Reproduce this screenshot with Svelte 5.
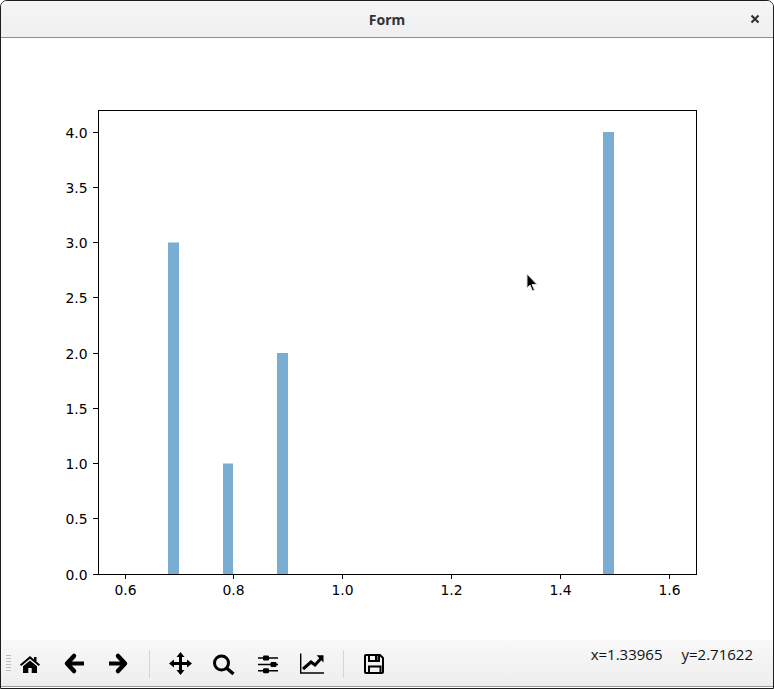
<script>
  const xTicks = [
    { v: 0.6, px: 125 },
    { v: 0.8, px: 233 },
    { v: 1.0, px: 342 },
    { v: 1.2, px: 451 },
    { v: 1.4, px: 560 },
    { v: 1.6, px: 669 }
  ];
  const yTicks = [0, 0.5, 1, 1.5, 2, 2.5, 3, 3.5, 4];
  const bars = [
    { x: 168, w: 11, v: 3 },
    { x: 223, w: 10, v: 1 },
    { x: 277, w: 11, v: 2 },
    { x: 603, w: 11, v: 4 }
  ];
  const left = 98, right = 696, top = 110, bottom = 574;
  const sy = (v) => bottom - v * 110.5;
</script>

<div class="window">
  <header class="titlebar">
    <span class="title">Form</span>
    <svg class="close" width="10" height="10" viewBox="0 0 10 10">
      <path d="M1.5 1.5 L8.5 8.5 M8.5 1.5 L1.5 8.5" stroke="#2e3436" stroke-width="2.2" fill="none" />
    </svg>
  </header>

  <main class="canvas">
    <svg class="plot" width="772" height="602" viewBox="1 38 772 602">
      {#each bars as b}
        <rect x={b.x} y={sy(b.v)} width={b.w} height={bottom - sy(b.v)} fill="#79add2" />
      {/each}
      <rect x={left + 0.5} y={top + 0.5} width={right - left} height={bottom - top} fill="none" stroke="#000" stroke-width="1" />
      {#each xTicks as t}
        <line x1={t.px + 0.5} x2={t.px + 0.5} y1={bottom} y2={bottom + 5} stroke="#000" />
        <text class="tick" x={t.px + 0.5} y={bottom + 21} text-anchor="middle">{t.v.toFixed(1)}</text>
      {/each}
      {#each yTicks as t}
        <line x1={left - 5} x2={left} y1={Math.floor(sy(t)) + 0.5} y2={Math.floor(sy(t)) + 0.5} stroke="#000" />
        <text class="tick" x={left - 10.5} y={sy(t) + 5.5} text-anchor="end">{t.toFixed(1)}</text>
      {/each}
      <!-- mouse pointer -->
      <path d="M527 274 L527 288 L530 285 L532.5 291 L534.5 290 L532 284.500 L537 284.500 Z" fill="#000" stroke="#ddd" stroke-width="1" />
    </svg>
  </main>

  <footer class="toolbar">
    <div class="grip"></div>
    <div class="tools">
      <button class="tool" aria-label="Home">
        <svg width="24" height="24" viewBox="0 0 24 24">
          <path d="M12 4 L2 12.500 L3.300 14 L12 6.700 L20.700 14 L22 12.500 L18.500 9.500 V5 H16 V7.400 Z" fill="#000" />
          <path d="M12 8.500 L5 14.300 V21 H10.300 V16 H13.700 V21 H19 V14.300 Z" fill="#000" />
        </svg>
      </button>
      <button class="tool" aria-label="Back">
        <svg width="24" height="24" viewBox="0 0 24 24">
          <path d="M12 4 L5 11.500 L12 19" stroke="#000" stroke-width="4.500" stroke-linejoin="round" stroke-linecap="round" fill="none" />
          <path d="M6 11.500 H22" stroke="#000" stroke-width="4" fill="none" />
        </svg>
      </button>
      <button class="tool" aria-label="Forward">
        <svg width="24" height="24" viewBox="0 0 24 24">
          <path d="M12 4 L19 11.500 L12 19" stroke="#000" stroke-width="4.500" stroke-linejoin="round" stroke-linecap="round" fill="none" />
          <path d="M3 11.500 H18" stroke="#000" stroke-width="4" fill="none" />
        </svg>
      </button>
      <span class="sep"></span>
      <button class="tool" aria-label="Pan">
        <svg width="24" height="24" viewBox="0 0 24 24">
          <path d="M12.500 4 V19 M5 11.500 H20" stroke="#000" stroke-width="3" fill="none" />
          <path d="M12.500 0 L16.500 5 H8.500 Z M12.500 23 L16.500 18 H8.500 Z M1 11.500 L6 7.500 V15.500 Z M24 11.500 L19 7.500 V15.500 Z" fill="#000" />
        </svg>
      </button>
      <button class="tool" aria-label="Zoom">
        <svg width="24" height="24" viewBox="0 0 24 24">
          <circle cx="9.500" cy="11" r="7" stroke="#000" stroke-width="3" fill="none" />
          <path d="M14.500 16 L21.500 22" stroke="#000" stroke-width="3.400" fill="none" />
        </svg>
      </button>
      <button class="tool" aria-label="Subplots">
        <svg width="24" height="24" viewBox="0 0 24 24">
          <path d="M2 6 H22 M2 12.500 H22 M2 18.800 H22" stroke="#000" stroke-width="1.400" fill="none" />
          <rect x="7" y="3.500" width="6" height="5" rx="1.200" fill="#000" />
          <rect x="14.500" y="10" width="6" height="5" rx="1.200" fill="#000" />
          <rect x="7" y="16.300" width="6" height="5" rx="1.200" fill="#000" />
        </svg>
      </button>
      <button class="tool" aria-label="Axes">
        <svg width="24" height="24" viewBox="0 0 24 24">
          <path d="M0.700 1.500 V21 H24" stroke="#000" stroke-width="1.400" fill="none" />
          <path d="M3 17 L11 10 L15 13 L21 6.500" stroke="#000" stroke-width="3" fill="none" />
          <path d="M16.500 3.200 H23.500 V10.500 Z" fill="#000" />
        </svg>
      </button>
      <span class="sep"></span>
      <button class="tool" aria-label="Save">
        <svg width="24" height="24" viewBox="0 0 24 24">
          <path d="M4 3 H18 L21 6 V20 Q21 21 20 21 H4 Q3 21 3 20 V4 Q3 3 4 3 Z" stroke="#000" stroke-width="2" fill="none" />
          <path d="M7 3 V9 H17 V3" stroke="#000" stroke-width="2" fill="none" />
          <path d="M13 4 H15.500 V8 H13 Z" fill="#000" />
          <path d="M7 21 V14.500 H18.500 V21" stroke="#000" stroke-width="2" fill="none" />
        </svg>
      </button>
    </div>
    <div class="coords">
      <span>x=1.33965</span>
      <span>y=2.71622</span>
    </div>
  </footer>
</div>

<style>
  :global(body) {
    margin: 0;
  }

  .window {
    width: 774px;
    height: 689px;
    box-sizing: border-box;
    display: flex;
    flex-direction: column;
    background: #fff;
    border: 1px solid #1c1c1c;
    border-radius: 7px 7px 0 0;
    overflow: hidden;
  }

  .titlebar {
    height: 37px;
    flex: none;
    box-sizing: border-box;
    display: flex;
    align-items: center;
    justify-content: center;
    position: relative;
    background: linear-gradient(#f5f5f5, #efefef);
    border-bottom: 1px solid #8f8f8f;
  }

  .title {
    font: bold 14px "Noto Sans", sans-serif;
    color: #2e3436;
  }

  .close {
    position: absolute;
    right: 13px;
    top: 13px;
  }

  .canvas {
    flex: 1;
    min-height: 0;
  }

  .plot {
    display: block;
  }

  .tick {
    font: 13.9px "DejaVu Sans", sans-serif;
    fill: #000;
  }

  .toolbar {
    height: 47px;
    flex: none;
    box-sizing: border-box;
    display: flex;
    align-items: flex-start;
    background: linear-gradient(#f8f8f8, #eeeeee);
    border-bottom: 1px solid #999;
    margin-bottom: 1px;
  }

  .grip {
    width: 5px;
    height: 18px;
    margin: 15px 0 0 5px;
    background-image: linear-gradient(#bbb 1px, transparent 1px), linear-gradient(90deg, #f4f4f4 1px, transparent 1px);
    background-size: 2px 3px;
  }

  .tools {
    display: flex;
    align-items: center;
    margin: 4px 0 0 -3px;
  }

  .tool {
    width: 44px;
    height: 40px;
    padding: 0;
    border: none;
    background: none;
    display: flex;
    align-items: center;
    justify-content: center;
  }

  .sep {
    width: 1px;
    height: 28px;
    background: #d6d6d6;
    margin: 0 8px 0 9px;
  }

  .coords {
    margin: 4px 20px 0 auto;
    display: flex;
    gap: 19px;
    font: 15px/20px "Open Sans", sans-serif;
    color: #111;
    white-space: nowrap;
  }
</style>
